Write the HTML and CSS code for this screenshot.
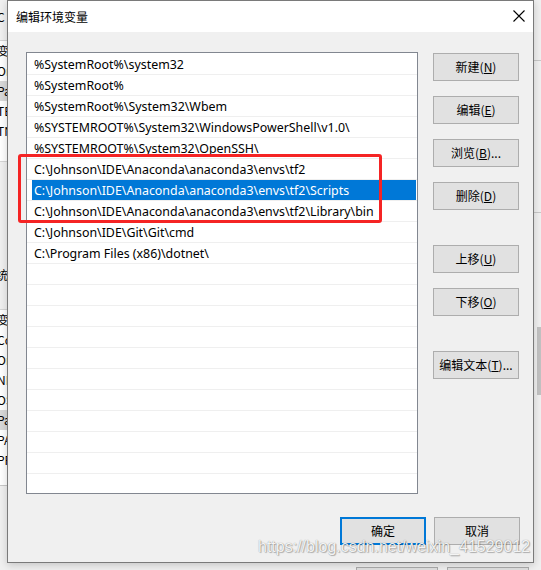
FILE: index.html
```html
<!DOCTYPE html>
<html>
<head>
<meta charset="utf-8">
<link rel="stylesheet" href="styles.css">
</head>
<body>
<div class="desk">
  <div class="bgwin">
    <div class="bg-left">
      <div class="bg-sec top"><span class="t">C</span></div>
      <div class="bg-list l1">
        <div class="bg-row">变</div>
        <div class="bg-row">Or</div>
        <div class="bg-row sel">Pa</div>
        <div class="bg-row">TE</div>
        <div class="bg-row">TN</div>
      </div>
      <div class="bg-sec mid"><span class="t">统</span></div>
      <div class="bg-list l2">
        <div class="bg-row">变</div>
        <div class="bg-row">Co</div>
        <div class="bg-row">Or</div>
        <div class="bg-row">NI</div>
        <div class="bg-row">OS</div>
        <div class="bg-row sel">Pa</div>
        <div class="bg-row">PA</div>
        <div class="bg-row">PR</div>
      </div>
    </div>
    <div class="bg-right">
      <div class="bg-rline a"></div>
      <div class="bg-rline b"></div>
      <div class="bg-thumb"></div>
    </div>
    <div class="bg-bottom">
      <div class="bg-btn b1"></div>
      <div class="bg-btn b2"></div>
    </div>
  </div>

  <div class="dialog">
    <div class="titlebar">
      <span class="title">编辑环境变量</span>
      <svg class="close" width="12" height="12" viewBox="0 0 12 12"><path d="M0.5 0.5 L11.5 11.5 M11.5 0.5 L0.5 11.5" stroke="#000" stroke-width="1.1" fill="none"/></svg>
    </div>
    <div class="content">
      <div class="main">
        <div class="list">
          <div class="row"><span class="lbl">%SystemRoot%\system32</span></div>
          <div class="row"><span class="lbl">%SystemRoot%</span></div>
          <div class="row"><span class="lbl">%SystemRoot%\System32\Wbem</span></div>
          <div class="row"><span class="lbl">%SYSTEMROOT%\System32\WindowsPowerShell\v1.0\</span></div>
          <div class="row"><span class="lbl">%SYSTEMROOT%\System32\OpenSSH\</span></div>
          <div class="row"><span class="lbl">C:\Johnson\IDE\Anaconda\anaconda3\envs\tf2</span></div>
          <div class="row selected"><span class="lbl">C:\Johnson\IDE\Anaconda\anaconda3\envs\tf2\Scripts</span></div>
          <div class="row"><span class="lbl">C:\Johnson\IDE\Anaconda\anaconda3\envs\tf2\Library\bin</span></div>
          <div class="row"><span class="lbl">C:\Johnson\IDE\Git\Git\cmd</span></div>
          <div class="row"><span class="lbl">C:\Program Files (x86)\dotnet\</span></div>
          <div class="row"></div><div class="row"></div><div class="row"></div><div class="row"></div>
          <div class="row"></div><div class="row"></div><div class="row"></div><div class="row"></div>
          <div class="row"></div><div class="row"></div><div class="row"></div>
        </div>
        <div class="side">
          <button class="btn">新建(<u>N</u>)</button>
          <button class="btn">编辑(<u>E</u>)</button>
          <button class="btn">浏览(<u>B</u>)...</button>
          <button class="btn">删除(<u>D</u>)</button>
          <button class="btn gap">上移(<u>U</u>)</button>
          <button class="btn">下移(<u>O</u>)</button>
          <button class="btn gap">编辑文本(<u>T</u>)...</button>
        </div>
      </div>
      <div class="footer">
        <button class="btn default">确定</button>
        <button class="btn">取消</button>
      </div>
    </div>
  </div>

  <div class="redbox"></div>
  <div class="watermark">https://blog.csdn.net/weixin_41529012</div>
</div>
</body>
</html>
```

FILE: styles.css
```css
* { box-sizing: border-box; }
html, body { margin: 0; padding: 0; }
body {
  width: 541px;
  height: 570px;
  overflow: hidden;
  background: #f0f0f0;
  font-family: "Noto Sans", "Noto Sans CJK SC", sans-serif;
}
.desk {
  position: relative;
  width: 541px;
  height: 570px;
  overflow: hidden;
}

/* background window */
.bgwin {
  position: absolute;
  inset: 0;
  background: #f0f0f0;
}
.bg-left {
  position: absolute;
  left: 0; top: 0;
  width: 8px;
  height: 570px;
  font-family: "Noto Sans CJK SC", sans-serif;
  font-size: 12px;
  color: #000;
  overflow: hidden;
}
.bg-sec { position: relative; }
.bg-sec.top { height: 41px; background: #f0f0f0; border-bottom: 1px solid #d6d6d6; }
.bg-sec.top .t { position: absolute; left: -3px; top: 8px; }
.bg-list { background: #fff; }
.bg-list.l1 { height: 120px; padding-top: 0; }
.bg-row { height: 20px; line-height: 20px; margin-left: -3px; }
.bg-row.sel { background: #d9d9d9; margin-left: 0; padding-left: 0; text-indent: -3px; }
.bg-sec.mid { height: 149px; background: #f0f0f0; border-top: 1px solid #d6d6d6; border-bottom: 1px solid #d6d6d6; }
.bg-sec.mid .t { position: absolute; left: -4px; top: 104px; }
.bg-list.l2 { height: 176px; border-bottom: 1px solid #c8c8c8; }

.bg-right {
  position: absolute;
  left: 534px; top: 0;
  width: 7px; height: 570px;
  background: #f0f0f0;
}
.bg-rline { position: absolute; left: 0; width: 7px; height: 1px; background: #c8c8c8; }
.bg-rline.a { top: 60px; }
.bg-rline.b { top: 212px; }
.bg-thumb { position: absolute; left: 3px; top: 327px; width: 4px; height: 68px; background: #c2c2c2; }

.bg-bottom { position: absolute; left: 0; top: 563px; width: 541px; height: 7px; }
.bg-btn { position: absolute; top: 4px; height: 10px; border: 1px solid #adadad; background: #e1e1e1; }
.bg-btn.b1 { left: 356px; width: 82px; }
.bg-btn.b2 { left: 447px; width: 82px; }

/* dialog */
.dialog {
  position: absolute;
  left: 7px;
  top: 0;
  width: 527px;
  height: 563px;
  background: #f0f0f0;
  border: 1px solid #7a7a7a;
  box-shadow: 0 2px 8px rgba(0,0,0,0.18);
  display: flex;
  flex-direction: column;
}
.titlebar {
  height: 31px;
  background: #fff;
  display: flex;
  align-items: center;
  justify-content: space-between;
  padding: 0 8px 1px 8px;
  flex: none;
}
.title {
  font-family: "Noto Sans CJK SC", sans-serif;
  font-size: 12px;
  color: #000;
}

.content {
  flex: 1;
  display: flex;
  flex-direction: column;
  padding: 20px 13px 17px 18px;
}
.main {
  display: flex;
  gap: 15px;
}
.list {
  width: 392px;
  height: 442px;
  background: #fff;
  border: 1px solid #828790;
  overflow: hidden;
  padding-top: 1px;
}
.row {
  height: 21px;
  border-bottom: 1px solid #efefef;
  display: flex;
  padding-left: 5px;
  padding-right: 1px;
  font-size: 12.4px;
  color: #000;
}
.lbl {
  flex: 1;
  padding-left: 2px;
  padding-top: 1px;
  line-height: 19px;
  white-space: nowrap;
}
.row.selected .lbl {
  background: #0078d7;
  color: #fff;
}

.side {
  display: flex;
  flex-direction: column;
  gap: 15px;
  padding-top: 1px;
}
.btn {
  width: 86px;
  height: 28px;
  background: #e1e1e1;
  border: 1px solid #adadad;
  font-family: "Noto Sans CJK SC", sans-serif;
  font-size: 12px;
  color: #000;
  padding: 0;
  margin: 0;
  line-height: 26px;
}
.btn u { text-decoration: underline; text-underline-offset: 1px; }
.btn.gap { margin-top: 20px; }

.footer {
  margin-top: auto;
  display: flex;
  justify-content: flex-end;
  gap: 8px;
}
.btn.default {
  border: 2px solid #0078d7;
  line-height: 24px;
}

/* annotation */
.redbox {
  position: absolute;
  left: 18px;
  top: 154px;
  width: 364px;
  height: 69px;
  border: 3px solid #f52424;
  border-radius: 3px;
}
.watermark {
  position: absolute;
  left: 258px;
  top: 538px;
  font-family: "Liberation Sans", Arial, sans-serif;
  font-size: 16px;
  color: rgba(255,255,255,0.92);
  text-shadow: 0 0 1px rgba(0,0,0,0.45), 1px 1px 1px rgba(0,0,0,0.25);
  white-space: nowrap;
}
```
